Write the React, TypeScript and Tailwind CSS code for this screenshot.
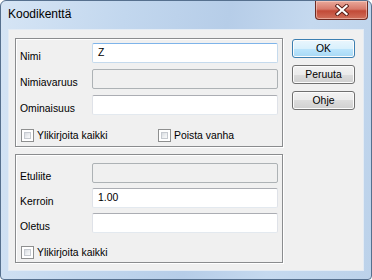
import React from 'react';

const font = { fontFamily: '"Liberation Sans", Arial, sans-serif' };

const Field = ({ label, value, disabled, focused }: { label: string; value?: string; disabled?: boolean; focused?: boolean }) => {
  let box = 'bg-white border-[#abadb3] border-l-[#dfe2e8] border-r-[#dfe2e8] border-b-[#e3e9ef]';
  if (disabled) box = 'bg-[#f0f0f0] border-[#adb2b5]';
  if (focused) box = 'bg-white border-[#7eb4ea] border-l-[#c5daed] border-r-[#c5daed] border-b-[#c5daed]';
  return (
    <div className="flex h-[20px]">
      <div className="w-[72px] pt-[8px] text-[10.4px] leading-[12px] text-black">{label}</div>
      <div className={`w-[186px] h-[20px] border rounded-[2px] flex items-center pl-[5px] text-[10.4px] text-black ${box}`}>
        {value}
      </div>
    </div>
  );
};

const Checkbox = ({ label }: { label: string }) => (
  <div className="flex items-center gap-[3px] h-[13px]">
    <div className="w-[13px] h-[13px] border border-[#8e8f8f] bg-white p-[2px]">
      <div className="w-full h-full border border-[#c6cad0] bg-[linear-gradient(135deg,#d8dbe0_0%,#eef0f2_60%,#fafafa_100%)]" />
    </div>
    <span className="text-[10.4px] leading-[13px] text-black">{label}</span>
  </div>
);

const Button = ({ label, primary }: { label: string; primary?: boolean }) => (
  <button
    type="button"
    className={`w-[63px] h-[19px] rounded-[3px] border text-[10.4px] leading-[17px] text-black shadow-[inset_0_0_0_1px_#fcfcfc] ${
      primary
        ? 'border-[#3c7fb1] bg-[linear-gradient(to_bottom,#eaf6fd_0%,#d9f0fc_50%,#bee6fd_50%,#a7d9f5_100%)] shadow-[inset_0_0_0_1px_#c6e9fb]'
        : 'border-[#707070] bg-[linear-gradient(to_bottom,#f2f2f2_0%,#ebebeb_50%,#dddddd_50%,#cfcfcf_100%)]'
    }`}
  >
    {label}
  </button>
);

const GroupBox = ({ children, className }: { children: React.ReactNode; className?: string }) => (
  <div className={`w-[268px] border border-[#8a8c8e] shadow-[1px_1px_0_#ffffff,inset_1px_1px_0_#ffffff] pl-[4px] pr-[4px] ${className ?? ''}`}>
    {children}
  </div>
);

export default function App() {
  return (
    <div
      className="w-[372px] h-[280px] flex flex-col border border-[#56708e] rounded-t-[6px] rounded-b-[4px] px-[7px] pb-[8px] bg-[linear-gradient(100deg,#d6e5f5_0%,#c2d7ee_30%,#b6cde8_55%,#c5d9ef_75%,#bcd2ea_100%)] overflow-hidden"
      style={font}
    >
      {/* title bar */}
      <div className="h-[28px] flex items-start justify-between shrink-0">
        <div className="pt-[6px] text-[12px] leading-[15px] text-black">Koodikenttä</div>
        <div className="mr-[-4px] w-[53px] h-[19px] rounded-b-[4px] border border-t-0 border-[#6d2b22] bg-[linear-gradient(to_bottom,#e9a99b_0%,#d77a6b_45%,#c24a37_55%,#d0705c_100%)] shadow-[inset_0_0_0_1px_rgba(255,220,210,0.5)] flex items-center justify-center">
          <svg width="14" height="12" viewBox="0 0 14 12">
            <path d="M2.5 2 L11.5 10 M11.5 2 L2.5 10" stroke="#5a1e17" strokeWidth="4" strokeLinecap="square" />
            <path d="M2.5 2 L11.5 10 M11.5 2 L2.5 10" stroke="#ffffff" strokeWidth="2.2" strokeLinecap="square" />
          </svg>
        </div>
      </div>

      {/* client area */}
      <div className="flex-1 bg-[#f0f0f0] border border-[#e3ebf4] flex pl-[6px] pt-[8px]">
        <div className="flex flex-col">
          <GroupBox className="pt-[4px] pb-[4px]">
            <div className="flex flex-col gap-[6px]">
              <Field label="Nimi" value="Z" focused />
              <Field label="Nimiavaruus" disabled />
              <Field label="Ominaisuus" />
            </div>
            <div className="flex mt-[14px] pl-[1px]">
              <div className="w-[137px]">
                <Checkbox label="Ylikirjoita kaikki" />
              </div>
              <Checkbox label="Poista vanha" />
            </div>
          </GroupBox>

          <GroupBox className="mt-[7px] pt-[8px] pb-[3px]">
            <div className="flex flex-col gap-[5px]">
              <Field label="Etuliite" disabled />
              <Field label="Kerroin" value="1.00" />
              <Field label="Oletus" />
            </div>
            <div className="flex mt-[13px] pl-[1px]">
              <Checkbox label="Ylikirjoita kaikki" />
            </div>
          </GroupBox>
        </div>

        <div className="flex flex-col gap-[7px] ml-[9px] mt-[1px]">
          <Button label="OK" primary />
          <Button label="Peruuta" />
          <Button label="Ohje" />
        </div>
      </div>
    </div>
  );
}
